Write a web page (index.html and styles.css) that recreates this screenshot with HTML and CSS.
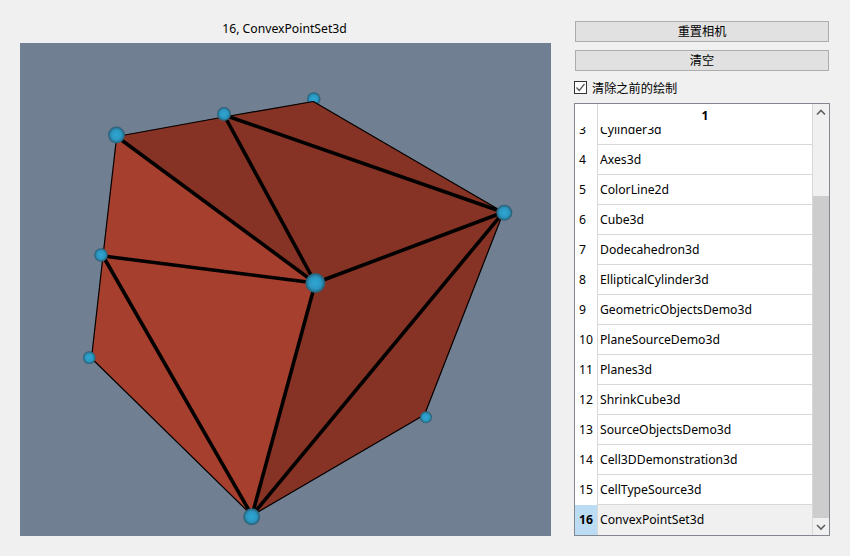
FILE: index.html
```html
<!DOCTYPE html>
<html lang="zh-CN">
<head>
  <meta charset="UTF-8" />
  <title>ConvexPointSet3d</title>
  <link rel="stylesheet" href="styles.css">
</head>
<body>
  <div class="window">
    <div class="view">
      <div class="view-title">16, ConvexPointSet3d</div>
      <svg class="scene" width="531" height="493" viewBox="20 43 531 493">
        <defs>
          <radialGradient id="ball" cx="50%" cy="50%" r="50%">
            <stop offset="0%" stop-color="#2fa6d4"/>
            <stop offset="60%" stop-color="#2b97c1"/>
            <stop offset="85%" stop-color="#27718f"/>
            <stop offset="100%" stop-color="#33586c"/>
          </radialGradient>
        </defs>
        <!-- back point, the hull covers its lower part -->
        <circle class="pt" cx="313.7" cy="99" r="6.8"/>

        <polygon class="dark" points="116.7,136.5 224,117 315.3,283"/>
        <polygon class="dark" points="224,117 313.3,101.5 503.4,212.3"/>
        <polygon class="dark" points="224,117 503.4,212.3 315.3,283"/>
        <polygon class="dark" points="315.3,283 503.4,212.3 252,515.5"/>
        <polygon class="dark" points="503.4,212.3 424.5,414.7 252,515.5"/>
        <polygon class="light" points="116.7,136.5 103,256 315.3,283"/>
        <polygon class="light" points="103,256 315.3,283 252,515.5"/>
        <polygon class="light" points="103,256 91.5,358.3 252,515.5"/>
        <polygon class="outline" points="116.7,136.5 224,117 313.3,101.5 503.4,212.3 424.5,414.7 252,515.5 91.5,358.3 103,256"/>
        <path class="edge" d="M116.7 136.5L315.3 283M224 115L315.3 283M224 115L503.4 212.3M103 256L315.3 283M103 256L252 515.5M315.3 283L503.4 212.3M315.3 283L252 515.5M503.4 212.3L252 515.5"/>

        <circle class="pt" cx="224" cy="114" r="7"/>
        <circle class="pt" cx="116.5" cy="135" r="8.5"/>
        <circle class="pt" cx="504.3" cy="212.7" r="8"/>
        <circle class="pt" cx="426" cy="417.3" r="6"/>
        <circle class="pt" cx="251.7" cy="516.7" r="8.5"/>
        <circle class="pt" cx="89.3" cy="357.7" r="6.4"/>
        <circle class="pt" cx="101" cy="255" r="6.8"/>
        <circle class="pt" cx="315.3" cy="283" r="10"/>
      </svg>
    </div>

    <div class="side">
      <button class="btn" type="button">重置相机</button>
      <button class="btn" type="button">清空</button>
      <label class="check">
        <span class="box">
          <svg width="11" height="11" viewBox="0 0 11 11"><path d="M1.5 5.5L4.2 8.5L9.5 2" fill="none" stroke="#555" stroke-width="1.2"/></svg>
        </span>
        清除之前的绘制
      </label>

      <div class="table">
        <div class="table-main">
          <div class="table-head"><span class="corner"></span><span class="head-cell">1</span></div>
          <div class="rows">
            <div class="row"><span class="num">3</span><span class="cell">Cylinder3d</span></div>
            <div class="row"><span class="num">4</span><span class="cell">Axes3d</span></div>
            <div class="row"><span class="num">5</span><span class="cell">ColorLine2d</span></div>
            <div class="row"><span class="num">6</span><span class="cell">Cube3d</span></div>
            <div class="row"><span class="num">7</span><span class="cell">Dodecahedron3d</span></div>
            <div class="row"><span class="num">8</span><span class="cell">EllipticalCylinder3d</span></div>
            <div class="row"><span class="num">9</span><span class="cell">GeometricObjectsDemo3d</span></div>
            <div class="row"><span class="num">10</span><span class="cell">PlaneSourceDemo3d</span></div>
            <div class="row"><span class="num">11</span><span class="cell">Planes3d</span></div>
            <div class="row"><span class="num">12</span><span class="cell">ShrinkCube3d</span></div>
            <div class="row"><span class="num">13</span><span class="cell">SourceObjectsDemo3d</span></div>
            <div class="row"><span class="num">14</span><span class="cell">Cell3DDemonstration3d</span></div>
            <div class="row"><span class="num">15</span><span class="cell">CellTypeSource3d</span></div>
            <div class="row current"><span class="num">16</span><span class="cell">ConvexPointSet3d</span></div>
          </div>
        </div>
        <div class="scrollbar">
          <svg class="arrow" width="16" height="17" viewBox="0 0 16 17"><path d="M4 10.5L8 6.5L12 10.5" fill="none" stroke="#606060" stroke-width="1.6"/></svg>
          <div class="track"><div class="thumb"></div></div>
          <svg class="arrow" width="16" height="17" viewBox="0 0 16 17"><path d="M4 7L8 11L12 7" fill="none" stroke="#606060" stroke-width="1.6"/></svg>
        </div>
      </div>
    </div>
  </div>
</body>
</html>
```

FILE: styles.css
```css
html, body {
  margin: 0;
  height: 100%;
}

body {
  background-color: #f0f0f0;
  color: #000;
  font-family: "Noto Sans", "Noto Sans CJK SC", sans-serif;
  font-size: 12.2px;
  overflow: hidden;
}

.window {
  display: flex;
  height: 556px;
  box-sizing: border-box;
  padding: 20px;
}

.view {
  width: 531px;
  display: flex;
  flex-direction: column;
}

.view-title {
  height: 23px;
  padding-right: 2px;
  line-height: 18px;
  text-align: center;
}

.scene {
  display: block;
  background-color: #707f91;
}

.dark { fill: #863225; stroke: #863225; stroke-width: 0.5; }
.light { fill: #a63f2e; stroke: #a63f2e; stroke-width: 0.5; }
.outline { fill: none; stroke: #000; stroke-width: 1.2; stroke-linejoin: round; }
.edge { fill: none; stroke: #000; stroke-width: 3.6; }
.pt { fill: url(#ball); }

.side {
  margin-left: 23px;
  width: 256px;
  padding-top: 1px;
  display: flex;
  flex-direction: column;
}

.btn {
  flex: none;
  height: 21px;
  margin: 0 0 8px 1px;
  width: 254px;
  padding: 0;
  border: 1px solid #adadad;
  background-color: #e1e1e1;
  font: inherit;
  line-height: 18px;
}

.check {
  flex: none;
  display: flex;
  align-items: center;
  gap: 5px;
  height: 17px;
  margin-bottom: 7px;
}

.box {
  width: 11px;
  height: 11px;
  border: 1px solid #333;
  background: #fff;
  display: flex;
}

.table {
  flex: 1;
  display: flex;
  border: 1px solid #828790;
  background: #fff;
  min-height: 0;
}

.table-main {
  flex: 1;
  min-width: 0;
  display: flex;
  flex-direction: column;
}

.table-head {
  height: 23px;
  display: flex;
  flex: none;
}

.corner {
  width: 22px;
}

.head-cell {
  flex: 1;
  text-align: center;
  font-weight: bold;
  line-height: 24px;
  border-left: 1px solid #d8d8d8;
  border-right: 1px solid #d8d8d8;
}

.rows {
  flex: 1;
  min-height: 0;
  overflow: hidden;
  display: flex;
  flex-direction: column;
  justify-content: flex-end;
}

.row {
  flex: none;
  height: 30px;
  display: flex;
}

.num {
  width: 22px;
  box-sizing: border-box;
  padding-left: 4px;
  line-height: 30px;
}

.cell {
  flex: 1;
  border-left: 1px solid #d8d8d8;
  border-right: 1px solid #d8d8d8;
  border-bottom: 1px solid #d8d8d8;
  padding-left: 2px;
  line-height: 30px;
}

.row:last-child .cell { border-bottom: none; }

.current .num {
  background-color: #bcdcf4;
  font-weight: bold;
}

.current .cell {
  background-color: #f0f0f0;
}

.scrollbar {
  width: 16px;
  display: flex;
  flex-direction: column;
  background-color: #f0f0f0;
  flex: none;
}

.arrow { display: block; flex: none; }

.track {
  flex: 1;
  display: flex;
  flex-direction: column;
  justify-content: flex-end;
}

.thumb {
  height: 322px;
  background-color: #cdcdcd;
}
```
